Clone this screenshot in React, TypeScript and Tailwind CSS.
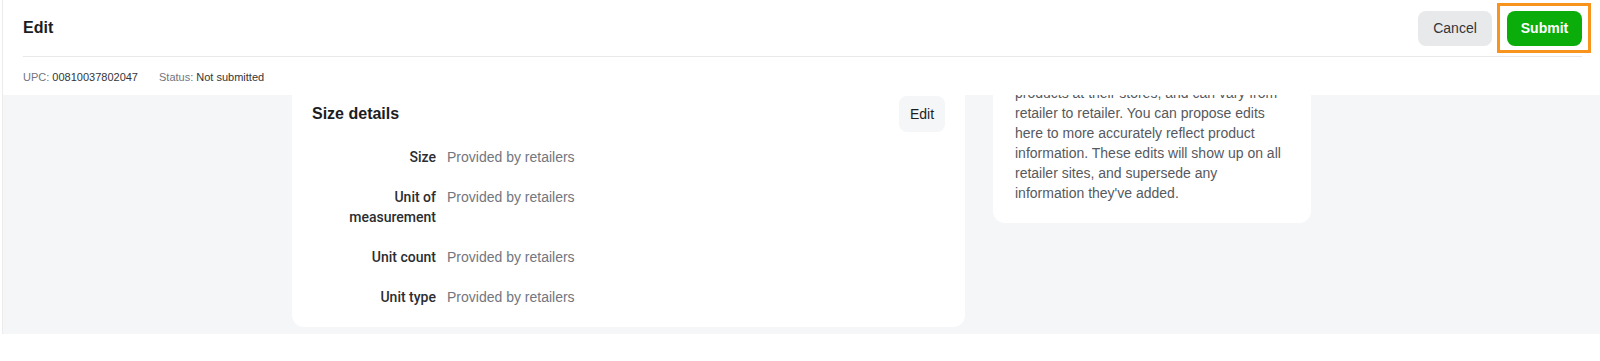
import React from "react";

const ROWS = [
  { label: "Size", value: "Provided by retailers" },
  { label: "Unit of measurement", value: "Provided by retailers" },
  { label: "Unit count", value: "Provided by retailers" },
  { label: "Unit type", value: "Provided by retailers" },
];

function DetailRow({ label, value }: { label: string; value: string }) {
  return (
    <div className="flex gap-[11px] text-sm leading-5">
      <div className="w-[124px] shrink-0 text-right font-['Roboto',sans-serif] font-medium text-[#2b2d31]">
        {label}
      </div>
      <div className="text-[#72767e]">{value}</div>
    </div>
  );
}

export default function App() {
  return (
    <div className="h-[361px] w-[1600px] overflow-hidden bg-white font-['Liberation_Sans',Arial,sans-serif]">
      <div className="ml-[2px] border-l border-[#ececee]">
        <header className="bg-white pl-5 pr-[18px]">
          <div className="flex h-[57px] items-center justify-between border-b border-[#e8e9eb]">
            <h1 className="text-base font-bold text-[#1c1d1f]">Edit</h1>
            <div className="flex items-center gap-[15px]">
              <button className="h-[35px] w-[74px] rounded-lg bg-[#e8e9eb] text-sm text-[#343538]">
                Cancel
              </button>
              <div className="relative">
                <button className="h-[35px] w-[75px] rounded-lg bg-[#0aad0a] text-sm font-bold text-white">
                  Submit
                </button>
                <span className="pointer-events-none absolute -top-[8px] -right-[9px] -bottom-[7px] -left-[10px] border-[3px] border-[#f8941e]" />
              </div>
            </div>
          </div>
          <div className="flex h-[38px] items-center gap-[21px] pt-[2px] text-[11px]">
            <span className="text-[#72767e]">
              UPC: <span className="text-[#343538]">00810037802047</span>
            </span>
            <span className="text-[#72767e]">
              Status: <span className="text-[#343538]">Not submitted</span>
            </span>
          </div>
        </header>

        <div className="h-[239px] overflow-hidden bg-[#f5f6f7]">
          <div className="-mt-[32px] flex items-start justify-center gap-[28px]">
            <section className="mt-[13px] w-[673px] rounded-xl bg-white p-5">
              <div className="flex items-center justify-between">
                <h2 className="text-base font-bold text-[#1c1d1f]">Size details</h2>
                <button className="h-9 w-[46px] rounded-lg bg-[#f5f6f7] text-sm text-[#1c1d1f]">
                  Edit
                </button>
              </div>
              <div className="mt-[15px] flex flex-col gap-5">
                {ROWS.map((r) => (
                  <DetailRow key={r.label} label={r.label} value={r.value} />
                ))}
              </div>
            </section>

            <aside className="w-[318px] rounded-xl bg-white px-[22px] pt-5 pb-5">
              <p className="text-sm leading-5 text-[#56595e]">
                products at their stores, and can vary from retailer to retailer. You can propose
                edits here to more accurately reflect product information. These edits will show up
                on all retailer sites, and supersede any information they've added.
              </p>
            </aside>
          </div>
        </div>
      </div>
    </div>
  );
}
